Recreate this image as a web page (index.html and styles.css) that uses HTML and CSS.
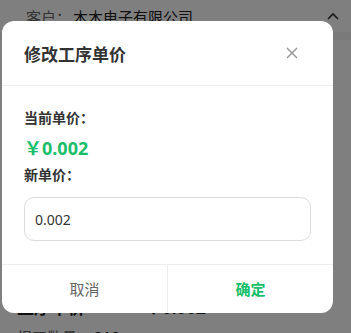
FILE: index.html
```html
<!DOCTYPE html>
<html lang="zh">
<head>
<meta charset="utf-8">
<link rel="stylesheet" href="styles.css">
</head>
<body>
<div class="page">
  <div class="card">
    <div class="row top">
      <span class="label">客户：</span><span class="value">木木电子有限公司</span>
      <svg class="chev" width="14" height="10" viewBox="0 0 14 10"><path d="M2 8 L7 3 L12 8" fill="none" stroke="#333" stroke-width="1.6"/></svg>
    </div>
  </div>
  <div class="card second">
    <div class="row"><span class="label">工序名称：</span><span class="value">贴片加工</span></div>
    <div class="row big"><span class="bold">工序单价</span><span class="bold">￥0.002</span></div>
    <div class="row"><span class="label">报工数量：</span><span class="value">210</span></div>
  </div>
</div>
<div class="mask"></div>
<div class="dialog">
  <div class="head">
    <span class="title">修改工序单价</span>
    <svg class="close" width="12" height="12" viewBox="0 0 12 12"><path d="M1 1 L11 11 M11 1 L1 11" stroke="#999" stroke-width="1.5" fill="none"/></svg>
  </div>
  <div class="body">
    <div class="lbl">当前单价：</div>
    <div class="price">￥0.002</div>
    <div class="lbl">新单价：</div>
    <div class="input">0.002</div>
  </div>
  <div class="foot">
    <div class="btn cancel">取消</div>
    <div class="btn ok">确定</div>
  </div>
</div>
</body>
</html>
```
FILE: styles.css
```css
* { box-sizing: border-box; }
html, body { margin: 0; padding: 0; }
body {
  width: 351px; height: 333px; overflow: hidden;
  background: #f5f5f5;
  font-family: "Noto Sans", "Noto Sans CJK SC", sans-serif;
  color: #333;
  position: relative;
}
.page { display: flex; flex-direction: column; }
.card { background: #fff; padding: 0 26px; }
.row { display: flex; align-items: center; height: 30px; font-size: 15px; }
.row.top { height: 32px; }
.label { color: #666; }
.value { color: #222; margin-left: 2px; }
.chev { margin-left: auto; margin-right: -15px; }
.second { margin-top: 8px; padding: 221px 17px 0; }
.row.big { gap: 60px; font-size: 17px; }
.bold { font-weight: 700; color: #222; }
.mask { position: absolute; inset: 0; background: rgba(0,0,0,0.5); }
.dialog {
  position: absolute; left: 2px; top: 21px; width: 331px; height: 292px;
  background: #fff; border-radius: 12px; overflow: hidden;
  display: flex; flex-direction: column;
}
.head {
  height: 65px; display: flex; align-items: center; justify-content: space-between;
  padding: 0 35px 0 22px; border-bottom: 1px solid #eee;
}
.title { font-size: 17px; font-weight: 700; color: #333; }
.close { display: block; }
.body { padding: 22px 22px 0; flex: 1; }
.lbl { font-size: 14px; font-weight: 700; color: #333; line-height: 20px; }
.price { font-size: 18px; font-weight: 700; color: #19be6b; line-height: 24px; margin: 8px 0 5px; }
.input {
  margin-top: 12px; height: 44px; border: 1px solid #ddd; border-radius: 10px;
  padding: 0 10px; display: flex; align-items: center; font-size: 14px; color: #333;
}
.foot { height: 49px; border-top: 1px solid #eee; display: flex; }
.btn { flex: 1; display: flex; align-items: center; justify-content: center; font-size: 15px; padding-bottom: 2px; }
.cancel { color: #666; border-right: 1px solid #eee; }
.ok { color: #19be6b; font-weight: 700; }
```
